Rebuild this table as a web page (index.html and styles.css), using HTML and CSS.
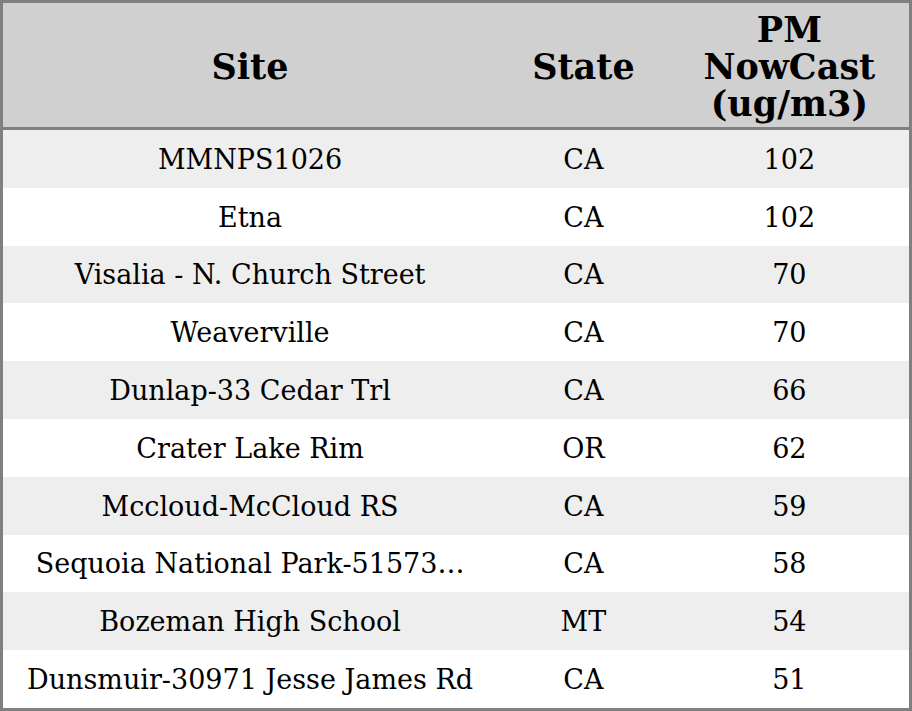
FILE: index.html
```html
<!DOCTYPE html>
<html>
<head>
<meta charset="utf-8">
<link rel="stylesheet" href="styles.css">
</head>
<body>
<table class="grid">
  <colgroup>
    <col class="c-site">
    <col class="c-state">
    <col class="c-pm">
  </colgroup>
  <thead>
    <tr><th>Site</th><th>State</th><th>PM<br>NowCast<br>(ug/m3)</th></tr>
  </thead>
  <tbody>
    <tr><td>MMNPS1026</td><td>CA</td><td>102</td></tr>
    <tr><td>Etna</td><td>CA</td><td>102</td></tr>
    <tr><td>Visalia - N. Church Street</td><td>CA</td><td>70</td></tr>
    <tr><td>Weaverville</td><td>CA</td><td>70</td></tr>
    <tr><td>Dunlap-33 Cedar Trl</td><td>CA</td><td>66</td></tr>
    <tr><td>Crater Lake Rim</td><td>OR</td><td>62</td></tr>
    <tr><td>Mccloud-McCloud RS</td><td>CA</td><td>59</td></tr>
    <tr><td>Sequoia National Park-51573…</td><td>CA</td><td>58</td></tr>
    <tr><td>Bozeman High School</td><td>MT</td><td>54</td></tr>
    <tr><td>Dunsmuir-30971 Jesse James Rd</td><td>CA</td><td>51</td></tr>
  </tbody>
</table>
</body>
</html>
```
FILE: styles.css
```css
html, body {
  margin: 0;
  padding: 0;
  background: #ffffff;
}
.grid {
  width: 912px;
  height: 711px;
  border-collapse: collapse;
  border: 3px solid #808080;
  font-family: "DejaVu Serif", serif;
  color: #000;
  table-layout: fixed;
}
.c-site { width: 494px; }
.c-state { width: 172px; }
.c-pm { width: 240px; }
.grid th {
  background: #d0d0d0;
  font-weight: bold;
  font-size: 35px;
  line-height: 37px;
  height: 122px;
  padding: 2px 0 0 0;
  text-align: center;
  border-bottom: 3px solid #808080;
}
.grid td {
  font-size: 27px;
  line-height: 32px;
  height: 55.8px;
  padding: 2px 0 0 0;
  text-align: center;
  white-space: nowrap;
}
.grid tbody tr:nth-child(odd) td {
  background: #eeeeee;
}
.grid tbody tr:nth-child(even) td {
  background: #ffffff;
}
```
